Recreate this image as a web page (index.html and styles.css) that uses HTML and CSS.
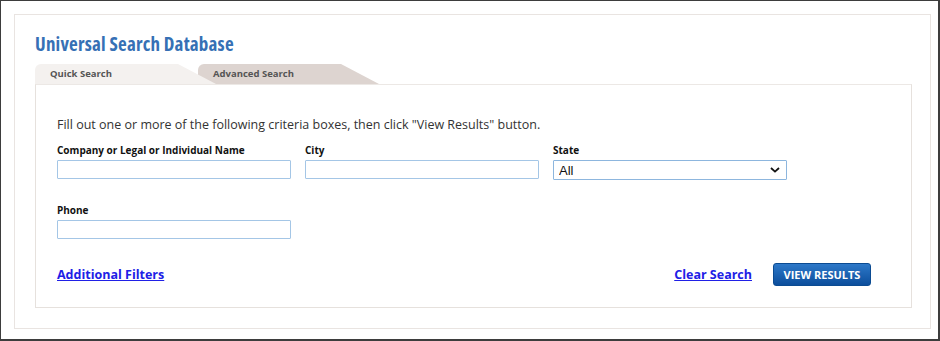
FILE: index.html
```html
<!DOCTYPE html>
<html lang="en">
<head>
    <meta charset="UTF-8">
    <title>Universal Search Database</title>
    <link rel="stylesheet" href="styles.css">
</head>
<body>
<div class="frame">
    <div class="panel">
        <h1 class="title">Universal Search Database</h1>

        <div class="tabs">
            <div class="tab tab-active">Quick Search</div>
            <div class="tab tab-other">Advanced Search</div>
        </div>

        <form class="search-box" id="searchForm">
            <p class="intro">Fill out one or more of the following criteria boxes, then click "View Results" button.</p>

            <div class="fields">
                <div class="field">
                    <label for="name">Company or Legal or Individual Name</label>
                    <input class="text-input" type="text" id="name">
                </div>
                <div class="field">
                    <label for="city">City</label>
                    <input class="text-input" type="text" id="city">
                </div>
                <div class="field">
                    <label for="state">State</label>
                    <div class="select-wrap">
                        <select class="text-input select-input" id="state">
                            <option>All</option>
                        </select>
                        <svg class="chevron" width="10" height="6" viewBox="0 0 10 6">
                            <path d="M1 1 L5 4.6 L9 1" fill="none" stroke="#111" stroke-width="1.8"/>
                        </svg>
                    </div>
                </div>
                <div class="field">
                    <label for="phone">Phone</label>
                    <input class="text-input" type="text" id="phone">
                </div>
            </div>

            <div class="actions">
                <a href="#" class="link">Additional Filters</a>
                <div class="actions-right">
                    <a href="#" class="link">Clear Search</a>
                    <button type="submit" class="btn-view">VIEW RESULTS</button>
                </div>
            </div>
        </form>
    </div>
</div>
</body>
</html>
```

FILE: styles.css
```css
* {
    box-sizing: border-box;
}

body {
    margin: 0;
    font-family: 'Open Sans', 'Noto Sans', sans-serif;
    background: #fff;
}

.frame {
    width: 940px;
    height: 341px;
    border: 2px solid #3d3d3d;
    border-top-width: 1px;
    border-left-width: 1px;
    padding: 13px 0 0 13px;
}

.panel {
    width: 917px;
    height: 315px;
    border: 1px solid #e9e4e1;
    padding: 17px 18px 0 20px;
}

.title {
    margin: 0;
    font-size: 19px;
    line-height: 24px;
    font-weight: 700;
    font-stretch: 75%;
    letter-spacing: 0.2px;
    color: #3670b5;
}

.tabs {
    display: flex;
    height: 20px;
    margin-top: 8px;
}

.tab {
    position: relative;
    height: 20px;
    font-size: 9.5px;
    line-height: 20px;
    font-weight: 700;
    font-stretch: 88%;
    color: #555;
    border-top-left-radius: 6px;
    padding-left: 15px;
}

.tab::after {
    content: '';
    position: absolute;
    left: 100%;
    top: 0;
    width: 38px;
    height: 20px;
    background: inherit;
    clip-path: polygon(0 0, 100% 100%, 0 100%);
}

.tab-active {
    width: 143px;
    background: #f4f1ef;
    z-index: 2;
}

.tab-other {
    width: 143px;
    margin-left: 20px;
    background: #ddd4d0;
    z-index: 1;
}

.search-box {
    height: 224px;
    border: 1px solid #e6e1dd;
    border-top-color: #ece8e5;
    padding: 31px 21px 0 21px;
}

.intro {
    margin: 0;
    font-size: 12.5px;
    line-height: 18px;
    color: #333;
}

.fields {
    display: grid;
    grid-template-columns: repeat(3, 234px);
    column-gap: 14px;
    row-gap: 23px;
    margin-top: 9px;
}

.field label {
    display: block;
    font-size: 10px;
    line-height: 14px;
    font-weight: 700;
    font-stretch: 88%;
    color: #111;
    margin-bottom: 3px;
}

.text-input {
    display: block;
    width: 234px;
    height: 19px;
    border: 1px solid #a4c6e6;
    border-radius: 1px;
    background: #fff;
    margin: 0;
    padding: 0 5px;
    font-family: 'Open Sans', sans-serif;
    font-size: 13px;
    color: #111;
}

.select-wrap {
    position: relative;
}

.select-input {
    height: 20px;
    border-color: #8db6de;
    appearance: none;
    -webkit-appearance: none;
    font-family: 'Liberation Sans', sans-serif;
    padding-left: 5px;
}

.chevron {
    position: absolute;
    right: 7px;
    top: 7px;
}

.actions {
    display: flex;
    justify-content: space-between;
    align-items: center;
    margin-top: 24px;
    padding-right: 19px;
}

.actions-right {
    display: flex;
    align-items: center;
    gap: 21px;
}

.link {
    font-size: 12.5px;
    line-height: 18px;
    font-weight: 700;
    font-stretch: 88%;
    color: #2020e6;
    text-decoration: underline;
}

.btn-view {
    width: 98px;
    height: 23px;
    border: 1px solid #0b4b92;
    border-radius: 3px;
    background: linear-gradient(#2d78c8, #0c4e9c);
    color: #fff;
    font-family: 'Open Sans', sans-serif;
    font-size: 11px;
    font-weight: 700;
    font-stretch: 88%;
    padding: 0;
    cursor: pointer;
}
```
